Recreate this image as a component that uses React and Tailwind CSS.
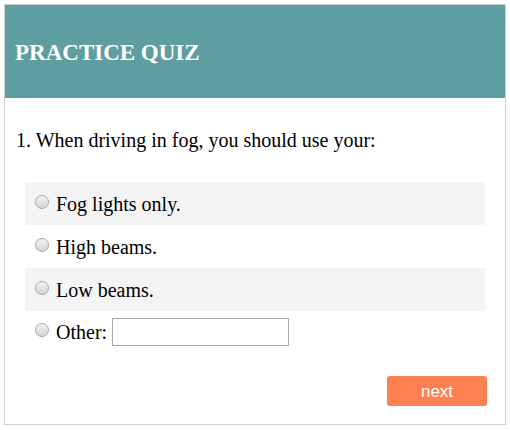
import React, { useState } from "react";

const options = ["Fog lights only.", "High beams.", "Low beams."];

const Radio = ({ checked, onClick }) => (
  <span
    onClick={onClick}
    className="inline-block w-[14px] h-[14px] rounded-full border border-[#a8a8a8] bg-gradient-to-b from-[#f4f4f4] to-[#d4d4d4] shrink-0 mr-[7px] relative top-[-2px]"
  >
    {checked && <span className="block w-[6px] h-[6px] rounded-full bg-[#333] m-[3px]" />}
  </span>
);

const App = () => {
  const [selected, setSelected] = useState(null);

  return (
    <div className="w-[510px] h-[430px] bg-white pt-[4px] pl-[4px] font-['Liberation_Serif',serif] text-black">
      <div className="w-[502px] h-[421px] border border-[#cfcfcf] flex flex-col">
        <div className="h-[93px] bg-[#5f9ea0] flex items-center pl-[10px] pt-[2px]">
          <h1 className="text-[23px] font-bold text-white leading-none">PRACTICE QUIZ</h1>
        </div>

        <div className="px-[10px] pt-[32px]">
          <p className="text-[20px] leading-none pl-[1px]">1. When driving in fog, you should use your:</p>

          <div className="mt-[32px] ml-[10px] w-[460px]">
            {options.map((opt, i) => (
              <label
                key={opt}
                className={`h-[43px] flex items-center pl-[10px] text-[20px] ${i % 2 === 0 ? "bg-[#f4f4f4]" : ""}`}
              >
                <Radio checked={selected === i} onClick={() => setSelected(i)} />
                {opt}
              </label>
            ))}
            <label className="h-[42px] flex items-center pl-[10px] text-[20px]">
              <Radio checked={selected === 3} onClick={() => setSelected(3)} />
              Other:
              <input
                type="text"
                className="ml-[5px] w-[177px] h-[28px] border border-[#a9a9a9] outline-none px-1 text-[14px]"
              />
            </label>
          </div>

          <div className="flex justify-end mt-[23px] pr-[8px]">
            <button className="w-[100px] h-[30px] rounded-[3px] bg-[#ff7f50] text-white text-[17px] font-['Liberation_Sans',sans-serif] leading-none">
              next
            </button>
          </div>
        </div>
      </div>
    </div>
  );
};

export default App;
